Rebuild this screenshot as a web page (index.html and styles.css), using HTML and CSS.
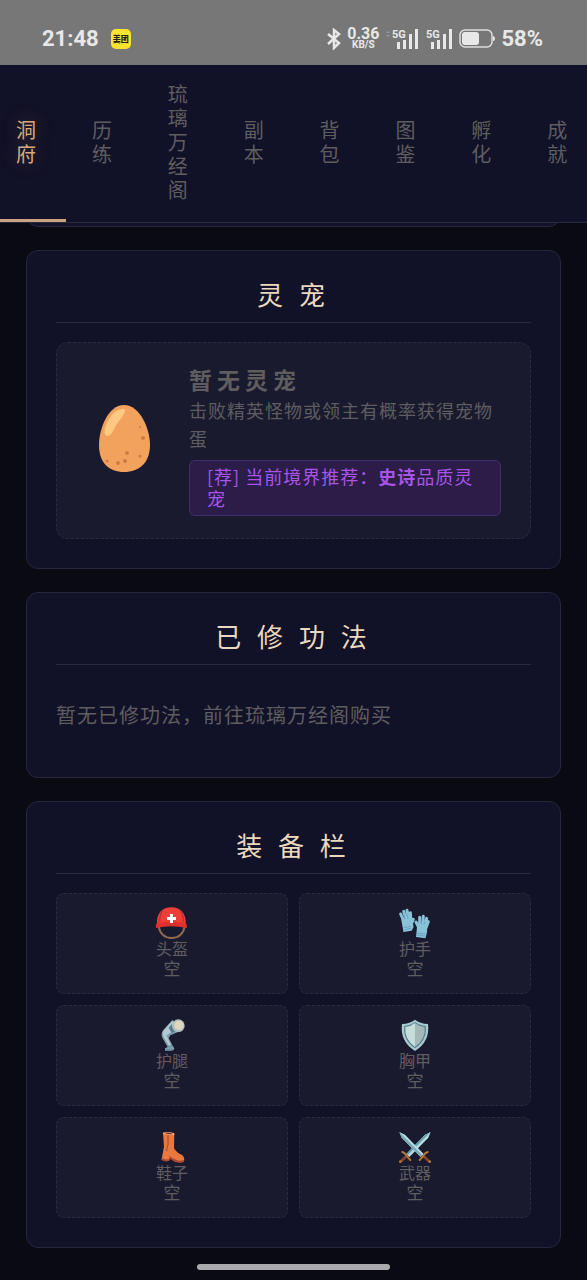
FILE: index.html
```
<!DOCTYPE html>
<html lang="zh-CN">
<head>
    <meta charset="UTF-8">
    <meta name="viewport" content="width=device-width, initial-scale=1.0">
    <title>洞府</title>
    <link rel="stylesheet" href="styles.css">
</head>
<body>
    <header class="status-bar">
        <span class="clock">21:48</span>
        <span class="app-badge">美团</span>
        <div class="status-icons">
            <svg class="bluetooth" width="14" height="22" viewBox="0 0 14 22">
                <path d="M1 6l11 9-5 5V2l5 4L1 16" fill="none" stroke="#e8e8e8" stroke-width="2.500"/>
            </svg>
            <div class="net-speed">
                <span class="net-value">0.36</span>
                <span class="net-unit">KB/S</span>
            </div>
            <svg class="signal" width="34" height="22" viewBox="0 0 34 22">
                <path d="M1 5l2-2 2 2zM1 7l2 2 2-2z" fill="#999"/>
                <text x="7" y="10">5G</text>
                <path d="M12 14h3v7h-3zM18 12h3v9h-3zM24 6h3v15h-3zM30 1h3v20h-3z" fill="#e8e8e8"/>
            </svg>
            <svg class="signal" width="28" height="22" viewBox="0 0 28 22">
                <text x="1" y="10">5G</text>
                <path d="M6 14h3v7H6zM12 12h3v9h-3zM18 6h3v15h-3zM24 1h3v20h-3z" fill="#e8e8e8"/>
            </svg>
            <svg class="battery" width="36" height="20" viewBox="0 0 36 20">
                <rect x="1" y="1" width="32" height="17" rx="5" fill="none" stroke="#dedede" stroke-width="1.500"/>
                <rect x="3" y="3" width="17" height="13" rx="3" fill="#e8e8e8"/>
                <path d="M34 7q2 0 2 2.500t-2 2.500z" fill="#e8e8e8"/>
            </svg>
            <span class="percent">58%</span>
        </div>
    </header>

    <nav class="tabs">
        <button class="tab active">洞府</button>
        <button class="tab">历练</button>
        <button class="tab">琉璃万经阁</button>
        <button class="tab">副本</button>
        <button class="tab">背包</button>
        <button class="tab">图鉴</button>
        <button class="tab">孵化</button>
        <button class="tab">成就</button>
    </nav>

    <main class="content">
        <section class="card card-scrolled"></section>

        <section class="card">
            <h2 class="card-title">灵 宠</h2>
            <div class="pet">
                <svg class="pet-icon" viewBox="0 0 76 76">
                    <path d="M38 4C54 4 64 28 64 44C64 62 53 71 38 71S13 62 13 44C13 28 22 4 38 4z" fill="#f2a25d"/>
                    <path d="M36 8C42 7 38 14 33 20C27 28 26 35 22 35C17 36 18 26 22 20C26 13 29 9 36 8z" fill="#ffc983"/>
                    <g fill="#cf7b47">
                        <circle cx="54" cy="26" r="1"/>
                        <circle cx="57" cy="37" r="2"/>
                        <circle cx="41" cy="52" r="2"/>
                        <circle cx="32" cy="62" r="2"/>
                        <circle cx="39" cy="60" r="2"/>
                        <circle cx="54" cy="55" r="1.500"/>
                        <circle cx="21" cy="60" r="1.500"/>
                    </g>
                </svg>
                <div class="pet-info">
                    <h3 class="pet-name">暂无灵宠</h3>
                    <p class="pet-desc">击败精英怪物或领主有概率获得宠物蛋</p>
                    <p class="pet-tip">[荐] 当前境界推荐：<strong>史诗</strong>品质灵宠</p>
                </div>
            </div>
        </section>

        <section class="card">
            <h2 class="card-title">已 修 功 法</h2>
            <p class="empty-text">暂无已修功法，前往琉璃万经阁购买</p>
        </section>

        <section class="card">
            <h2 class="card-title">装 备 栏</h2>
            <div class="slots">
                <div class="slot">
                    <svg class="slot-icon" viewBox="0 0 102 102">
                        <path d="M11 62Q18 96 50 96T89 62" fill="none" stroke="#8c6b50" stroke-width="6"/>
                        <path d="M6 54C4 22 22 4 49 4S94 22 92 54z" fill="#ee3e37"/>
                        <path d="M23 14Q13 28 14 48M76 14Q86 28 85 48" fill="none" stroke="#c92d30" stroke-width="4"/>
                        <path d="M6 50Q50 44 92 50Q98 57 95 66Q50 56 3 66Q0 57 6 50z" fill="#df302f"/>
                        <path d="M45 24h9v9h9v9h-9v9h-9v-9h-9v-9h9z" fill="#fff"/>
                    </svg>
                    <span class="slot-name">头盔</span>
                    <span class="slot-item">空</span>
                </div>
                <div class="slot">
                    <svg class="slot-icon" viewBox="0 0 102 102">
                        <g stroke="#8ac3d8" stroke-width="9" stroke-linecap="round" fill="#8ac3d8">
                            <path d="M17 45L8 24M25 42L17 16M33 42L27 13M39 46L37 20M40 54L46 40"/>
                            <path d="M15 44L38 39L42 62L38 70L20 73z"/>
                            <path d="M62 64L54 48M65 56L65 34M74 56L76 31M80 60L86 37M83 68L91 47"/>
                            <path d="M62 58L82 58L83 76L79 92L59 89z"/>
                        </g>
                        <path d="M17 65L39 61M18 71L40 67M58 81L82 84M57 87L81 90" stroke="#5896b1" stroke-width="2"/>
                        <path d="M21 40L18 28M30 39L28 26M69 55V44M78 56L80 46" stroke="#5896b1" stroke-width="2"/>
                    </svg>
                    <span class="slot-name">护手</span>
                    <span class="slot-item">空</span>
                </div>
                <div class="slot">
                    <svg class="slot-icon" viewBox="0 0 102 102">
                        <path d="M52 6L78 38L46 52L41 60L52 82L58 91Q57 99 47 98L30 98L30 91L38 87L21 58Q17 43 27 34z" fill="#7c9ead"/>
                        <path d="M54 7L29 34Q20 42 25 55L42 84L49 83L34 52L62 35z" fill="#afc8d1"/>
                        <path d="M50 19L64 38L50 45L41 29z" fill="#577c8b"/>
                        <circle cx="70" cy="23" r="19" fill="#afbfc0"/>
                        <circle cx="72" cy="22" r="14" fill="#e2d5bd"/>
                        <path d="M39 86L51 82M31 95H55" stroke="#668e9f" stroke-width="3"/>
                    </svg>
                    <span class="slot-name">护腿</span>
                    <span class="slot-item">空</span>
                </div>
                <div class="slot">
                    <svg class="slot-icon" viewBox="0 0 102 102">
                        <path d="M51 5Q66 17 90 18Q97 70 51 99Q5 70 12 18Q36 17 51 5z" fill="#a9cbd0"/>
                        <path d="M51 12Q65 23 83 24Q88 66 51 91Q14 66 19 24Q37 23 51 12z" fill="#537d88"/>
                        <path d="M51 15Q63 25 80 27Q84 63 51 87z" fill="#a4b8b8"/>
                        <path d="M51 15Q39 25 22 27Q18 63 51 87z" fill="#c5dedd"/>
                    </svg>
                    <span class="slot-name">胸甲</span>
                    <span class="slot-item">空</span>
                </div>
                <div class="slot">
                    <svg class="slot-icon" viewBox="0 0 102 102">
                        <path d="M24 8Q40 4 58 10L57 55Q65 69 81 75Q90 82 87 94Q79 100 61 94L45 84L42 91Q31 95 20 87L27 50z" fill="#e87840"/>
                        <path d="M24 8Q41 4 58 10L57 16Q40 15 24 12z" fill="#ffb080"/>
                        <path d="M28 9Q42 7 55 12Q43 14 28 9z" fill="#4e2928"/>
                        <path d="M39 15L39 45Q35 54 35 63" fill="none" stroke="#9f432d" stroke-width="3"/>
                        <path d="M20 84Q31 91 42 87L44 79Q60 91 74 92L87 90V95Q78 101 60 96L46 87L42 93Q31 97 19 90z" fill="#ad4930"/>
                    </svg>
                    <span class="slot-name">鞋子</span>
                    <span class="slot-item">空</span>
                </div>
                <div class="slot">
                    <svg class="slot-icon" viewBox="0 0 102 102">
                        <path d="M98 6L91 23L34 81L25 72L81 14z" fill="#b5dce2"/>
                        <path d="M98 6L29 76L25 72L81 14z" fill="#679eac"/>
                        <path d="M4 6L21 14L77 72L68 81L11 23z" fill="#b5dce2"/>
                        <path d="M4 6L73 76L68 81L11 23z" fill="#7ba8b3"/>
                        <path d="M25 79L9 94M77 79L93 94" stroke="#874329" stroke-width="8"/>
                        <path d="M13 66Q20 68 25 76T37 90M89 66Q82 68 77 76T65 90" fill="none" stroke="#b97736" stroke-width="6" stroke-linecap="round"/>
                        <circle cx="7" cy="95" r="4" fill="#b97736"/>
                        <circle cx="95" cy="95" r="4" fill="#b97736"/>
                    </svg>
                    <span class="slot-name">武器</span>
                    <span class="slot-item">空</span>
                </div>
            </div>
        </section>
    </main>

    <footer class="home-area">
        <div class="home-bar"></div>
    </footer>
</body>
</html>
```
FILE: styles.css
```
* {
    box-sizing: border-box;
    margin: 0;
    padding: 0;
}
body {
    min-height: 100vh;
    font-family: "Noto Sans CJK SC", sans-serif;
    letter-spacing: 1px;
    color: #5f5d60;
    background-color: #0a0a12;
    overflow-x: hidden;
}

/* status bar */
.status-bar {
    display: flex;
    align-items: center;
    height: 65px;
    padding: 12px 44px 0 42px;
    font-family: Roboto, sans-serif;
    letter-spacing: 0;
    color: #e8e8e8;
    background-color: #777;
}
.clock {
    font-size: 22px;
    font-weight: 700;
}
.app-badge {
    width: 20px;
    height: 20px;
    margin-left: 12px;
    border-radius: 5px;
    font-family: "Noto Sans CJK SC", sans-serif;
    font-size: 8px;
    font-weight: 900;
    line-height: 20px;
    text-align: center;
    color: #222;
    background-color: #fbe32f;
}
.status-icons {
    display: flex;
    align-items: center;
    gap: 6px;
    margin-left: auto;
}
.net-speed {
    display: flex;
    flex-direction: column;
    align-items: center;
    font-weight: 700;
}
.net-value {
    font-size: 16px;
    line-height: 12px;
}
.net-unit {
    font-size: 10px;
    line-height: 10px;
}
.signal text {
    font-size: 11px;
    font-weight: 700;
    fill: #e8e8e8;
}
.percent {
    font-size: 22px;
    font-weight: 700;
}

/* tabs */
.tabs {
    display: flex;
    margin: 0 -10px;
    border-bottom: 1px solid #28283f;
    background-color: #111127;
    position: relative;
    z-index: 1;
}
.tab {
    flex: 1;
    padding: 17px 26px;
    border: none;
    border-bottom: 3px solid transparent;
    font-family: inherit;
    font-size: 20px;
    line-height: 24px;
    letter-spacing: 1px;
    text-align: left;
    color: #5f5d60;
    background: none;
}
.tab.active {
    color: #d9aa78;
    border-bottom-color: #c8a582;
    text-shadow: 0 0 20px rgba(217, 170, 120, 0.3);
}

/* cards */
.content {
    display: flex;
    flex-direction: column;
    gap: 23px;
    padding: 0 26px;
}
.card {
    padding: 27px 29px 29px;
    border: 1px solid #262640;
    border-radius: 12px;
    background-color: #111127;
}
/* tail of the card that is scrolled under the tabs */
.card-scrolled {
    margin-top: -54px;
}
.card-title {
    margin-bottom: 19px;
    padding-bottom: 12px;
    border-bottom: 1px solid #2a2a3f;
    font-size: 26px;
    font-weight: 400;
    line-height: 32px;
    letter-spacing: 5px;
    text-align: center;
    color: #ead9be;
}

/* pet */
.pet {
    display: flex;
    align-items: center;
    gap: 27px;
    padding: 19px 29px 22px;
    border: 1px dashed #2b2b40;
    border-radius: 12px;
    background-color: #1a1a2e;
}
.pet-icon {
    flex: none;
    width: 76px;
    height: 76px;
}
.pet-info {
    flex: 1;
}
.pet-name {
    font-size: 23px;
    font-weight: 700;
    line-height: 34px;
    letter-spacing: 5px;
}
.pet-desc {
    margin-bottom: 8px;
    font-size: 18px;
    line-height: 28px;
}
.pet-tip {
    padding: 4px 17px 6px;
    border: 1px solid #43306a;
    border-radius: 6px;
    font-size: 18px;
    line-height: 22px;
    color: #a855e8;
    background-color: #2b1c48;
}

.empty-text {
    padding: 15px 0 17px;
    font-size: 20px;
    line-height: 32px;
}

/* equipment */
.slots {
    display: grid;
    grid-template-columns: 1fr 1fr;
    gap: 11px;
}
.slot {
    display: flex;
    flex-direction: column;
    align-items: center;
    padding: 12px 12px 15px;
    border: 1px dashed #2b2b40;
    border-radius: 8px;
    letter-spacing: 0;
    line-height: 20px;
    background-color: #1a1a2e;
}
.slot-icon {
    width: 34px;
    height: 34px;
    margin-bottom: -2px;
}
.slot-name {
    font-size: 16px;
}
.slot-item {
    font-size: 17px;
}

.home-area {
    padding: 16px 0 10px;
}
.home-bar {
    width: 33%;
    height: 6px;
    margin: 0 auto;
    border-radius: 3px;
    background-color: #aaaaad;
}
```
